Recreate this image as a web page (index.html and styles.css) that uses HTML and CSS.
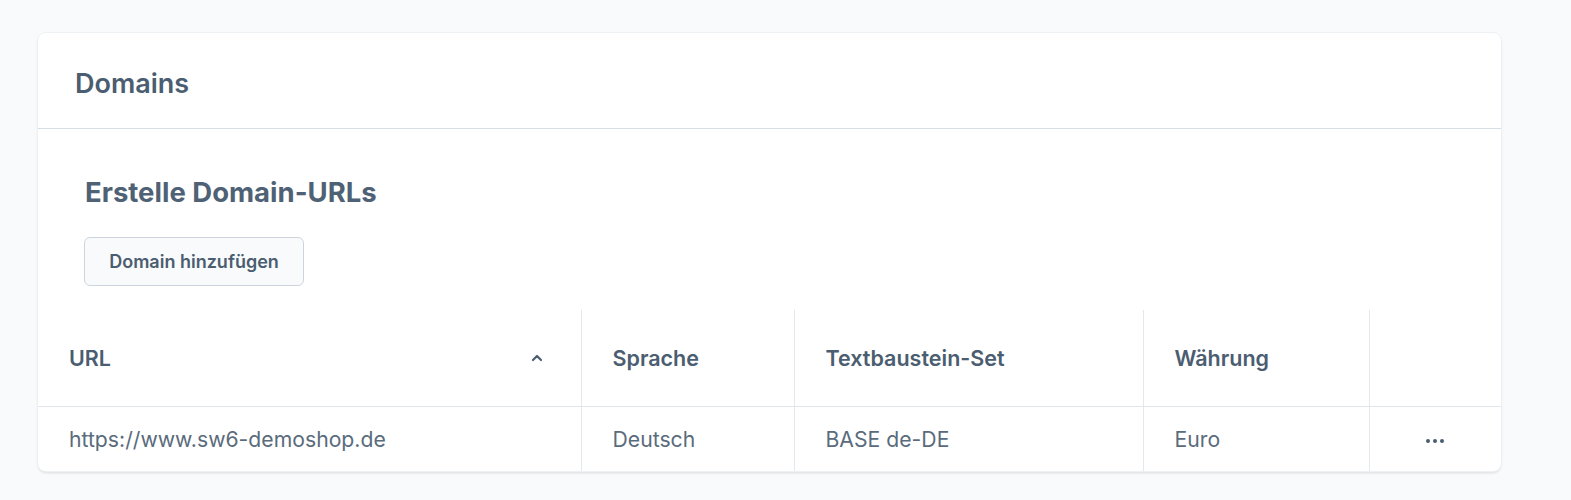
FILE: index.html
```html
<!DOCTYPE html>
<html lang="de">
<head>
    <meta charset="UTF-8">
    <meta name="viewport" content="width=device-width, initial-scale=1.0">
    <title>Domains</title>
    <link rel="stylesheet" href="styles.css">
</head>
<body>
    <div class="page">
        <div class="card">
            <div class="card-header">
                <h2>Domains</h2>
            </div>

            <div class="card-body">
                <h3>Erstelle Domain-URLs</h3>
                <button type="button" class="btn">Domain hinzufügen</button>
            </div>

            <table class="grid">
                <colgroup>
                    <col class="col-url">
                    <col class="col-lang">
                    <col class="col-snippet">
                    <col class="col-currency">
                    <col>
                </colgroup>
                <thead>
                    <tr>
                        <th>
                            <div class="th-sort">
                                <span>URL</span>
                                <svg class="chevron" width="12" height="8" viewBox="0 0 12 8">
                                    <path d="M2 6 L6 2 L10 6" fill="none" stroke="#4b5d70" stroke-width="2.2" stroke-linecap="round" stroke-linejoin="round"/>
                                </svg>
                            </div>
                        </th>
                        <th>Sprache</th>
                        <th>Textbaustein-Set</th>
                        <th>Währung</th>
                        <th></th>
                    </tr>
                </thead>
                <tbody>
                    <tr>
                        <td>https://www.sw6-demoshop.de</td>
                        <td>Deutsch</td>
                        <td>BASE de-DE</td>
                        <td>Euro</td>
                        <td class="actions"><span class="dots"><i></i><i></i><i></i></span></td>
                    </tr>
                </tbody>
            </table>
        </div>
    </div>
</body>
</html>
```

FILE: styles.css
```css
body {
    margin: 0;
    background-color: #f9fafb;
    font-family: 'Inter', 'Noto Sans', sans-serif;
    color: #52667a;
}

.page {
    padding: 33px 0 30px 38px;
}

.card {
    width: 1463px;
    background: #fff;
    border-radius: 8px;
    box-shadow: 0 0 0 1px #eef1f4, 0 2px 3px rgba(0, 0, 0, 0.12);
    overflow: hidden;
}

.card-header {
    height: 89px;
    padding-top: 6px;
    display: flex;
    align-items: center;
    padding-left: 37px;
    border-bottom: 1px solid #d6dee5;
}

.card-header h2 {
    margin: 0;
    font-size: 27px;
    font-weight: 600;
    color: #4b5d70;
}

.card-body {
    padding: 43px 0 24px 47px;
}

.card-body h3 {
    margin: 0 0 25px;
    font-size: 27.5px;
    font-weight: 700;
    color: #4f6275;
    line-height: 40px;
}

.btn {
    width: 220px;
    height: 49px;
    margin-left: -1px;
    background: #f9fafb;
    border: 1px solid #ccd5de;
    border-radius: 6px;
    font-family: inherit;
    font-size: 18px;
    font-weight: 600;
    color: #4b5d70;
    cursor: pointer;
}

.grid {
    width: 100%;
    border-collapse: collapse;
    table-layout: fixed;
}

.col-url { width: 543px; }
.col-lang { width: 213px; }
.col-snippet { width: 349px; }
.col-currency { width: 226px; }

.grid th,
.grid td {
    text-align: left;
    padding: 0 31px;
    border-right: 1px solid #e3e8ec;
}

.grid th:last-child,
.grid td:last-child {
    border-right: none;
}

.grid th {
    height: 96px;
    font-size: 21.5px;
    font-weight: 600;
    color: #4b5d70;
    border-bottom: 1px solid #e0e6eb;
}

.grid td {
    height: 64px;
    font-size: 21.2px;
    color: #5a6b7c;
}

.th-sort {
    display: flex;
    align-items: center;
    justify-content: space-between;
    padding-right: 7px;
}

.actions {
    text-align: center !important;
}

.dots {
    display: inline-flex;
    gap: 3px;
    vertical-align: middle;
}

.dots i {
    width: 4px;
    height: 4px;
    border-radius: 50%;
    background: #4b5d70;
}
```
